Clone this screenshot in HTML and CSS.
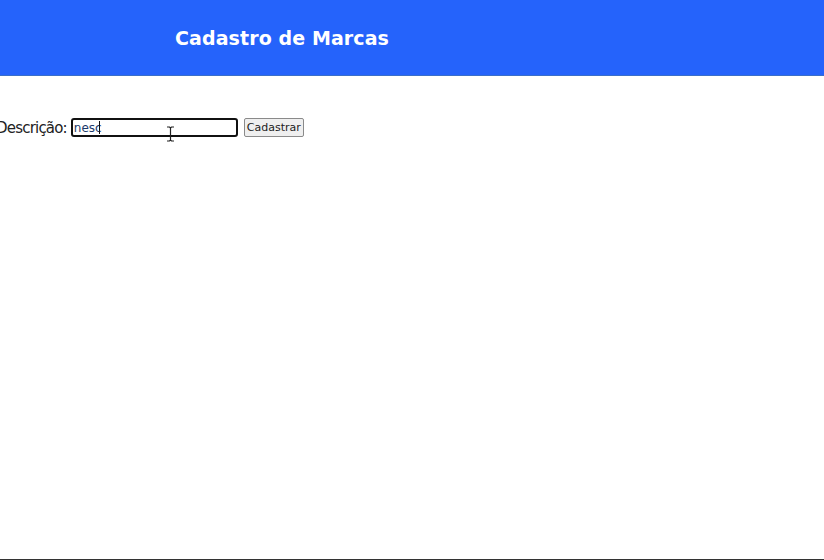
FILE: index.html
```html
<!DOCTYPE html>
<html lang="pt-BR">
<head>
<meta charset="utf-8">
<title>Cadastro de Marcas</title>
<link rel="stylesheet" href="styles.css">
</head>
<body>
<header class="topbar">
  <h1 class="title">Cadastro de Marcas</h1>
</header>
<main class="content">
  <form class="form">
    <label class="label" for="desc">Descrição:</label>
    <span class="field-wrap">
      <input class="field" id="desc" type="text" value="nesc">
      <span class="caret"></span>
      <svg class="ibeam" width="9" height="16" viewBox="0 0 9 16"><path d="M1 1h2.5l1 1 1-1H8M4.5 2v12M1 15h2.5l1-1 1 1H8" fill="none" stroke="#222" stroke-width="1.2"/></svg>
    </span>
    <button class="btn" type="button">Cadastrar</button>
  </form>
</main>
<div class="bottom-line"></div>
</body>
</html>
```
FILE: styles.css
```css
html, body {
  margin: 0;
  padding: 0;
  height: 100%;
  background: #ffffff;
  font-family: "DejaVu Sans", Verdana, sans-serif;
  overflow: hidden;
}
body {
  display: flex;
  flex-direction: column;
}
.topbar {
  height: 76px;
  background: #2563fb;
  border-bottom: 1px solid #3a6fc9;
  display: flex;
  align-items: center;
  padding-left: 175px;
  box-sizing: border-box;
}
.title {
  margin: 0;
  color: #ffffff;
  font-size: 19px;
  font-weight: bold;
  letter-spacing: 0.1px;
}
.content {
  flex: 1;
  padding-top: 42px;
}
.form {
  display: flex;
  align-items: center;
  margin-left: -4px;
}
.label {
  font-size: 15px;
  letter-spacing: -0.8px;
  color: #222;
  margin-right: 4px;
}
.field-wrap {
  position: relative;
  display: inline-block;
}
.field {
  display: block;
  width: 167px;
  height: 19px;
  box-sizing: border-box;
  border: 2px solid #111;
  border-radius: 3px;
  padding: 0 1px;
  font-family: "DejaVu Sans", Verdana, sans-serif;
  font-size: 12px;
  color: #1b3a6b;
  outline: none;
}
.caret {
  position: absolute;
  left: 28px;
  top: 3px;
  width: 1px;
  height: 13px;
  background: #111;
}
.ibeam {
  position: absolute;
  left: 95px;
  top: 8px;
}
.btn {
  margin-left: 6px;
  height: 19px;
  padding: 0 2px;
  font-family: "DejaVu Sans", Verdana, sans-serif;
  font-size: 11px;
  color: #222;
  background: #efefef;
  border: 1px solid #8a8a8a;
  border-radius: 2px;
}
.bottom-line {
  height: 1px;
  background: #333;
}
```
